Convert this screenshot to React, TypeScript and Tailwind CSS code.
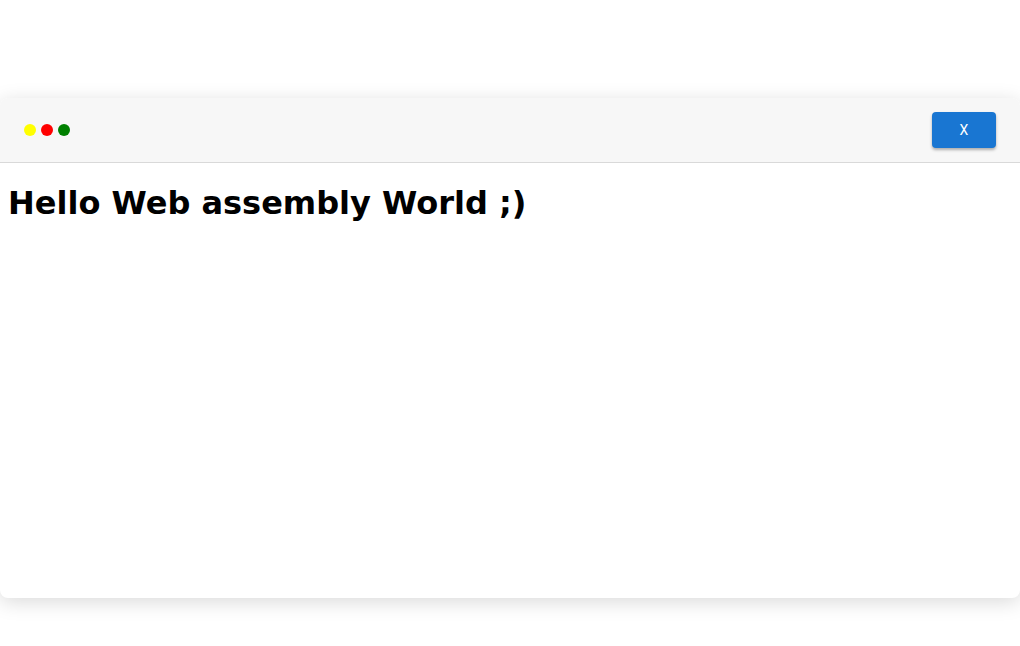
export default function App() {
  return (
    <div className="w-[1020px] h-[646px] bg-white pt-[98px]" style={{ fontFamily: '"DejaVu Sans", sans-serif' }}>
      <div className="h-[500px] w-full rounded-lg bg-white shadow-[0_4px_20px_rgba(0,0,0,0.15)] overflow-hidden">
        <div className="h-[65px] flex items-center justify-between px-6 bg-[#f7f7f7] border-b border-[#d9d9d9]">
          <div className="flex gap-[5px]">
            <span className="w-3 h-3 rounded-full bg-[#ffff00]" />
            <span className="w-3 h-3 rounded-full bg-[#ff0000]" />
            <span className="w-3 h-3 rounded-full bg-[#008000]" />
          </div>
          <button className="w-16 h-9 rounded bg-[#1976d2] text-white text-sm shadow-[0_2px_3px_rgba(0,0,0,0.3)]" style={{ fontFamily: 'Roboto, sans-serif' }}>
            X
          </button>
        </div>
        <h1 className="mx-2 mt-[22px] text-[32px] font-bold text-black leading-[37px]">Hello Web assembly World ;)</h1>
      </div>
    </div>
  );
}
